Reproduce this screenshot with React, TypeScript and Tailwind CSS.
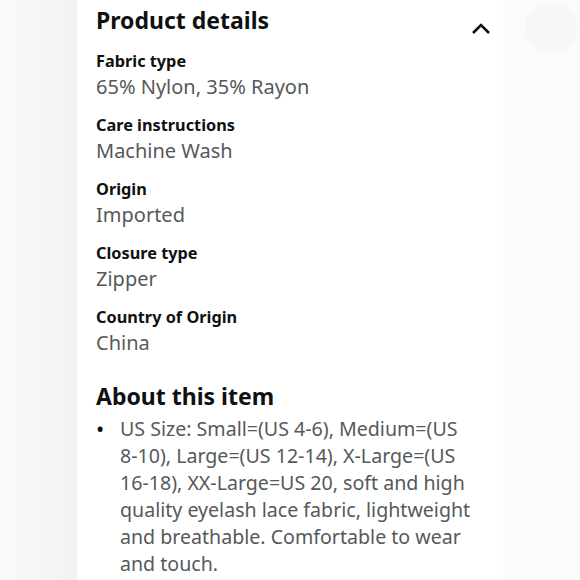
const details = [
  { label: "Fabric type", value: "65% Nylon, 35% Rayon" },
  { label: "Care instructions", value: "Machine Wash" },
  { label: "Origin", value: "Imported" },
  { label: "Closure type", value: "Zipper" },
  { label: "Country of Origin", value: "China" },
];

function NoBreak({ children }: { children: string }) {
  return <span className="whitespace-nowrap">{children}</span>;
}

export default function App() {
  return (
    <div
      className="flex h-[580px] w-[580px] overflow-hidden bg-white"
      style={{ fontFamily: '"Noto Sans", "Open Sans", sans-serif' }}
    >
      <div className="w-[77px] shrink-0 bg-gradient-to-r from-[#fafafa] to-[#f2f2f2]" />
      <div className="w-[426px] shrink-0 bg-white pl-[19px] pr-[12px]">
        <div className="flex items-center justify-between pt-[3px]">
          <h2 className="text-[23px] font-bold leading-[34px] text-[#0f1111]">Product details</h2>
          <svg width="20" height="12" viewBox="0 0 20 12" className="mt-[17px]">
            <path d="M2 10 L10 2 L18 10" fill="none" stroke="#0f1111" strokeWidth="2.6" />
          </svg>
        </div>
        <div className="mt-[11px] flex flex-col gap-[12px]">
          {details.map((d) => (
            <div key={d.label}>
              <div className="text-[16.3px] font-bold leading-[26px] text-[#0f1111]">{d.label}</div>
              <div className="text-[20px] leading-[26px] text-[#565959]">{d.value}</div>
            </div>
          ))}
        </div>
        <h2 className="mt-[23px] text-[23px] font-bold leading-[34px] text-[#0f1111]">About this item</h2>
        <ul className="mt-[2px] flex flex-col">
          <li className="flex gap-[10px] text-[19.6px] leading-[27px] text-[#565959]">
            <span className="w-[14px] shrink-0 text-[22px] text-[#0f1111]">•</span>
            <span>
              US Size: Small=(US <NoBreak>4-6),</NoBreak> Medium=(US <NoBreak>8-10),</NoBreak> Large=(US{" "}
              <NoBreak>12-14),</NoBreak> X-Large=(US <NoBreak>16-18),</NoBreak> XX-Large=US 20, soft and high
              quality eyelash lace fabric, lightweight and breathable. Comfortable to wear and touch.
            </span>
          </li>
        </ul>
      </div>
      <div className="relative flex-1 bg-[#fbfbfb]">
        <div className="absolute left-[22px] top-[2px] h-[52px] w-[52px] rounded-full bg-[#f7f7f7]" />
      </div>
    </div>
  );
}
